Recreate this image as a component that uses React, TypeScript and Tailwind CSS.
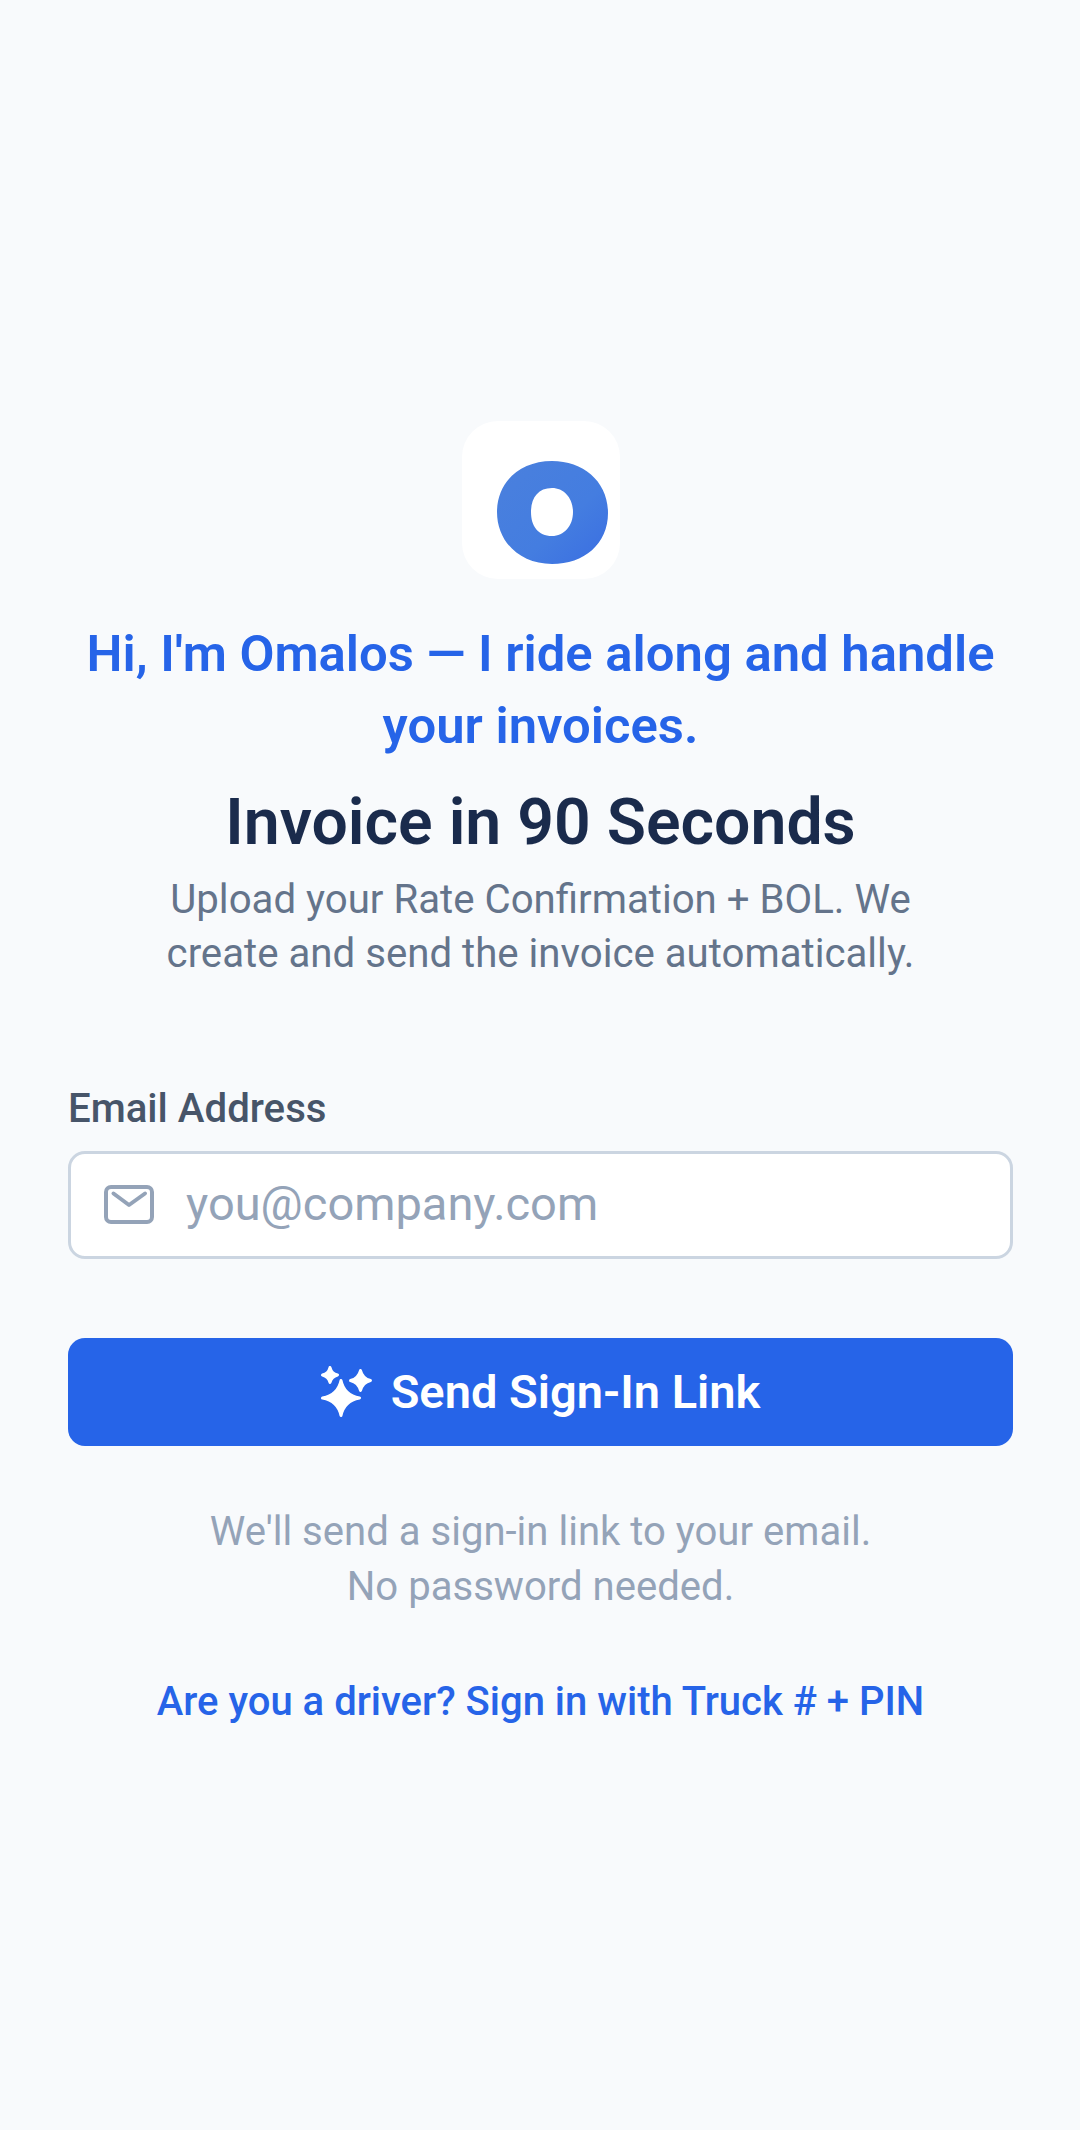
export default function App() {
  return (
    <div className="min-h-[2130px] bg-[#f8fafc] pl-[68px] pr-[67px] pt-[421px] flex flex-col items-stretch font-['Roboto',sans-serif]">
      <div className="flex flex-col items-center">
        <div className="w-[158px] h-[158px] rounded-[36px] bg-white flex items-center justify-center">
          <svg width="158" height="158" viewBox="0 0 158 158">
            <defs>
              <linearGradient id="g" x1="0" y1="0" x2="1" y2="1">
                <stop offset="0" stopColor="#4a80dd" />
                <stop offset="0.6" stopColor="#447de0" />
                <stop offset="1" stopColor="#3a6ee2" />
              </linearGradient>
            </defs>
            <path fillRule="evenodd" fill="url(#g)" d="M90 40C122 40 146 61 146 92C146 123 122 143 90 143C58 143 35 121 35 91C35 61 58 40 90 40ZM90 67C76 67 69 77 69 91C69 105 76 115 90 115C102 115 111 105 111 91C111 77 102 67 90 67Z" />
          </svg>
        </div>
        <h2 className="mt-[39px] text-[50.8px] leading-[72px] font-semibold text-[#2664e8] text-center">
          Hi, I'm Omalos — I ride along and handle your invoices.
        </h2>
        <h1 className="mt-[24px] text-[64.3px] leading-[72px] font-semibold text-[#1a2b4c] text-center">
          Invoice in 90 Seconds
        </h1>
        <p className="mt-[15px] w-[800px] text-[40.2px] leading-[54px] text-[#64748b] text-center">
          Upload your Rate Confirmation + BOL. We create and send the invoice automatically.
        </p>
      </div>
      <label className="mt-[105px] text-[40.2px] leading-[46px] font-medium text-[#475569]">Email Address</label>
      <div className="mt-[19px] h-[107.5px] rounded-[17px] border-[3px] border-[#cbd5e1] bg-white flex items-center pl-[33px]">
        <svg width="50" height="39" viewBox="0 0 50 39" fill="none" stroke="#94a3b8" strokeWidth="4" strokeLinecap="round" strokeLinejoin="round">
          <rect x="2" y="2" width="46" height="35" rx="5" />
          <path d="M9.5 8.5L25 20L41 8.5" />
        </svg>
        <span className="ml-[32px] text-[47px] text-[#94a3b8] -translate-y-px">you@company.com</span>
      </div>
      <button className="mt-[79.5px] h-[107.5px] rounded-[17px] bg-[#2664e8] flex items-center justify-center gap-[18px]">
        <svg width="52" height="52" viewBox="0 0 52 52" fill="white" stroke="white" strokeWidth="3" strokeLinejoin="round">
          <path d="M20 14.5Q23 29 38.5 32Q23 35 20 49.5Q17 35 1.5 32Q17 29 20 14.5Z" />
          <path d="M39.5 4.5Q41.5 12.5 49.5 14.5Q41.5 16.5 39.5 24.5Q37.5 16.5 29.5 14.5Q37.5 12.5 39.5 4.5Z" />
          <path d="M9 1.5Q10.5 7.5 16.5 9Q10.5 10.5 9 16.5Q7.5 10.5 1.5 9Q7.5 7.5 9 1.5Z" />
        </svg>
        <span className="text-[47px] font-semibold text-white">Send Sign-In Link</span>
      </button>
      <p className="mt-[58.5px] text-[40.1px] leading-[55px] text-[#94a3b8] text-center">
        We'll send a sign-in link to your email.<br />No password needed.
      </p>
      <a className="mt-[63px] text-[40px] leading-[50px] font-medium text-[#2664e8] text-center">
        Are you a driver? Sign in with Truck # + PIN
      </a>
    </div>
  );
}
